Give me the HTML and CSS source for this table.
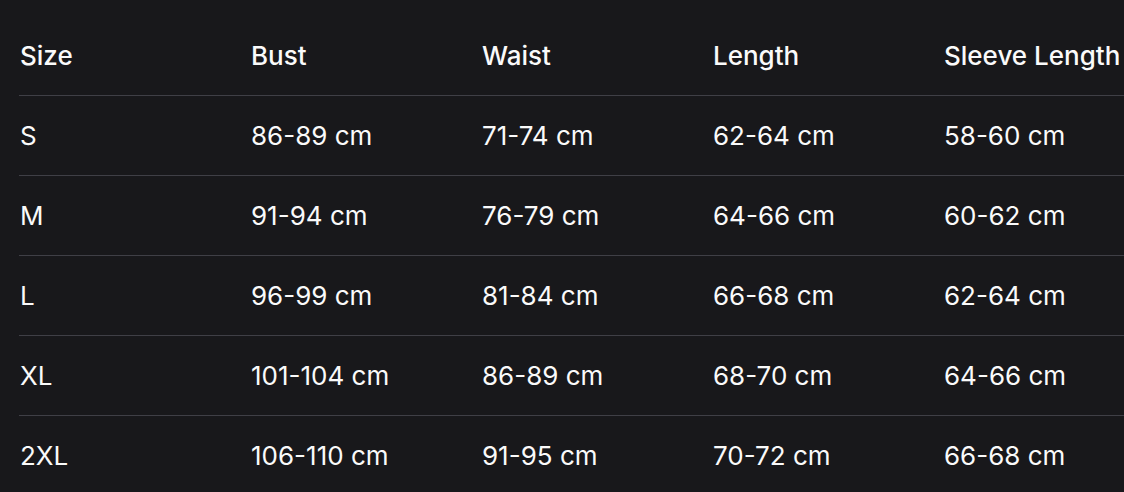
FILE: index.html
```html
<!DOCTYPE html>
<html lang="en">
<head>
<meta charset="utf-8">
<title>Size Chart</title>
<link rel="stylesheet" href="styles.css">
</head>
<body>
<div class="wrap">
  <table class="size-table">
    <thead>
      <tr><th>Size</th><th>Bust</th><th>Waist</th><th>Length</th><th>Sleeve Length</th></tr>
    </thead>
    <tbody>
      <tr><td>S</td><td>86-89 cm</td><td>71-74 cm</td><td>62-64 cm</td><td>58-60 cm</td></tr>
      <tr><td>M</td><td>91-94 cm</td><td>76-79 cm</td><td>64-66 cm</td><td>60-62 cm</td></tr>
      <tr><td>L</td><td>96-99 cm</td><td>81-84 cm</td><td>66-68 cm</td><td>62-64 cm</td></tr>
      <tr><td>XL</td><td>101-104 cm</td><td>86-89 cm</td><td>68-70 cm</td><td>64-66 cm</td></tr>
      <tr><td>2XL</td><td>106-110 cm</td><td>91-95 cm</td><td>70-72 cm</td><td>66-68 cm</td></tr>
    </tbody>
  </table>
</div>
</body>
</html>
```
FILE: styles.css
```css
html, body {
  margin: 0;
  padding: 0;
  background: #18181b;
  overflow: hidden;
}
body {
  font-family: Inter, "Noto Sans", sans-serif;
  color: #fafafa;
}
.wrap {
  padding: 15px 0 0 19px;
  overflow: hidden;
  height: 492px;
  box-sizing: border-box;
}
.size-table {
  border-collapse: collapse;
  table-layout: fixed;
  width: 1155px;
}
.size-table th,
.size-table td {
  width: 231px;
  height: 80px;
  padding: 2px 0 0 1px;
  box-sizing: border-box;
  text-align: left;
  font-size: 26px;
  line-height: 30px;
  vertical-align: middle;
  border-bottom: 1px solid #3f3f46;
  white-space: nowrap;
}
.size-table th {
  font-weight: 500;
}
.size-table td {
  font-weight: 400;
}
```
